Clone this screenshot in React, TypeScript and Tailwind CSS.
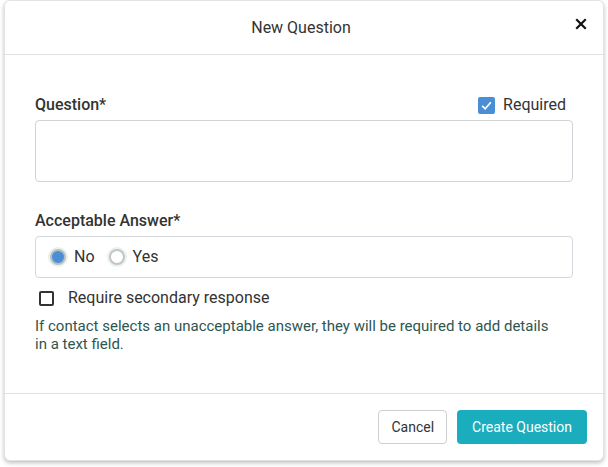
import { useState } from "react";

export default function App() {
  const [required, setRequired] = useState(true);
  const [answer, setAnswer] = useState("no");
  const [secondary, setSecondary] = useState(false);

  return (
    <div className="min-h-[467px] bg-white px-1 pb-2 font-['Roboto',sans-serif] text-[#333]">
      <div className="flex flex-col rounded-b-md rounded-t-md border border-[#e2e2e2] bg-white shadow-[0_2px_4px_rgba(0,0,0,0.25)]">
        <div className="relative flex h-[54px] items-center justify-center border-b border-[#e0e0e0] pr-[6px]">
          <h2 className="text-[16px] leading-5">New Question</h2>
          <button className="absolute right-[16px] top-[17px] text-[#111]">
            <svg width="12" height="12" viewBox="0 0 12 12">
              <path d="M2 2 L10 10 M10 2 L2 10" stroke="currentColor" strokeWidth="2.2" strokeLinecap="square" />
            </svg>
          </button>
        </div>

        <div className="flex flex-col px-[30px] pt-[40px] pb-[40px]">
          <div className="flex items-center justify-between pb-[5px]">
            <label className="text-[16px] font-medium leading-5">Question*</label>
            <label className="mr-[7px] flex items-center gap-[8px] text-[16px] leading-5" onClick={() => setRequired(!required)}>
              <span className="flex h-[17px] w-[17px] items-center justify-center rounded-[2px] bg-[#4a8fd6]">
                {required && (
                  <svg width="13" height="13" viewBox="0 0 12 12">
                    <path d="M2 6.3 L4.8 9 L10 3" stroke="white" strokeWidth="1.6" fill="none" />
                  </svg>
                )}
              </span>
              Required
            </label>
          </div>
          <textarea className="h-[62px] resize-none rounded-[4px] border border-[#cfd3d8] outline-none" />

          <label className="mt-[29px] text-[16px] font-medium leading-5">Acceptable Answer*</label>
          <div className="mt-[5px] flex h-[42px] items-center gap-[12px] rounded-[4px] border border-[#d4d7db] px-[12px]">
            {[
              { id: "no", label: "No" },
              { id: "yes", label: "Yes" },
            ].map((opt) => (
              <label key={opt.id} className="flex items-center gap-[6px] text-[16px]" onClick={() => setAnswer(opt.id)}>
                <span className="flex h-[20px] w-[20px] items-center justify-center rounded-full bg-[#e6f1f1]">
                  <span
                    className={
                      answer === opt.id
                        ? "h-[16px] w-[16px] rounded-full border-[2px] border-[#bdbdbd] bg-[#4a8fd6]"
                        : "h-[16px] w-[16px] rounded-full border-[2px] border-[#c4c4c4] bg-white"
                    }
                  />
                </span>
                {opt.label}
              </label>
            ))}
          </div>

          <label className="mt-[10px] flex items-center gap-[14px] pl-[4px] text-[16px] leading-5" onClick={() => setSecondary(!secondary)}>
            <span className="h-[15px] w-[15px] rounded-[2px] border-[2px] border-[#333]" />
            Require secondary response
          </label>
          <p className="mt-[9px] pr-[20px] text-[15px] leading-[18px] text-[#2e5650]">
            If contact selects an unacceptable answer, they will be required to add details in a text field.
          </p>
        </div>

        <div className="flex justify-end gap-[10px] border-t border-[#e0e0e0] px-[16px] pt-[16px] pb-[16px]">
          <button className="h-[34px] rounded-[4px] border border-[#cfcfcf] px-[12px] text-[14px] text-[#333]">Cancel</button>
          <button className="h-[34px] rounded-[4px] bg-[#19adbd] px-[15px] text-[14px] text-white">Create Question</button>
        </div>
      </div>
    </div>
  );
}
